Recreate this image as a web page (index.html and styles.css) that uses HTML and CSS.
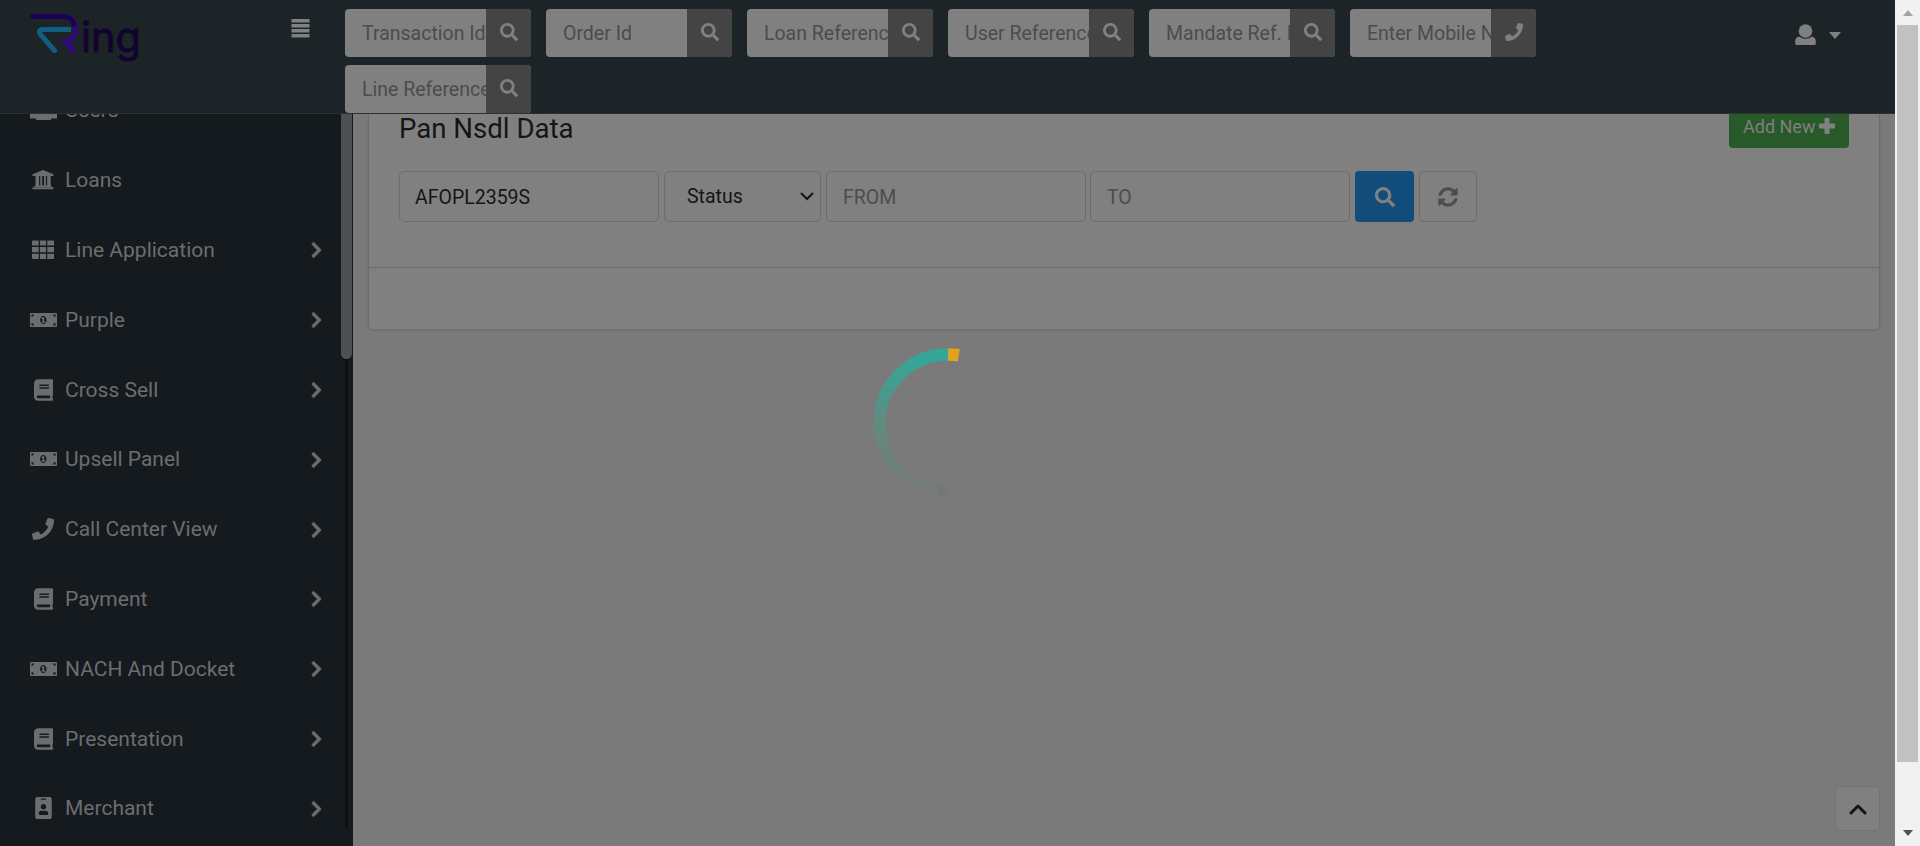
FILE: index.html
```html
<!DOCTYPE html>
<html lang="en">
<head>
<meta charset="utf-8">
<title>Pan Nsdl Data</title>
<link rel="stylesheet" href="styles.css">
</head>
<body>
<svg class="defs" width="0" height="0">
  <symbol id="search" viewBox="0 0 512 512"><path d="M505 442.7L405.3 343c-4.500-4.500-10.600-7-17-7H372c27.600-35.300 44-79.700 44-128C416 93.100 322.900 0 208 0S0 93.100 0 208s93.100 208 208 208c48.300 0 92.700-16.400 128-44v16.300c0 6.400 2.500 12.500 7 17l99.700 99.700c9.400 9.400 24.600 9.400 33.900 0l28.300-28.300c9.400-9.400 9.400-24.600.1-34zM208 336c-70.700 0-128-57.200-128-128 0-70.700 57.200-128 128-128 70.700 0 128 57.200 128 128 0 70.700-57.200 128-128 128z"/></symbol>
  <symbol id="phone" viewBox="0 0 512 512"><path d="M493.400 24.600l-104-24c-11.300-2.600-22.900 3.300-27.500 13.900l-48 112c-4.200 9.800-1.400 21.300 6.900 28l60.600 49.600c-36 76.700-98.900 140.500-177.200 177.200l-49.600-60.600c-6.800-8.300-18.200-11.100-28-6.900l-112 48C3.900 366.500-2 378.100.6 389.400l24 104C27.100 504.200 36.700 512 48 512c256.100 0 464-207.500 464-464 0-11.200-7.700-20.900-18.600-23.400z"/></symbol>
  <symbol id="chev" viewBox="0 0 320 512"><path stroke-width="24" d="M285.476 272.971L91.132 467.314c-9.373 9.373-24.569 9.373-33.941 0l-22.667-22.667c-9.357-9.357-9.375-24.522-.04-33.901L188.505 256 34.484 101.255c-9.335-9.379-9.317-24.544.04-33.901l22.667-22.667c9.373-9.373 24.569-9.373 33.941 0L285.475 239.030c9.373 9.372 9.373 24.568.001 33.941z"/></symbol>
  <symbol id="bank" viewBox="0 0 22 20"><path d="M11 0 21.500 4.300V6H.5V4.300zM3.500 6h3.600v9.500h1.200V6h1.900v9.500h1.800V6h1.900v9.500h1.200V6h3.600v9.500h.7v1.500H2.800v-1.500h.7zM.5 17.200h21v2H.5z"/></symbol>
  <symbol id="grid" viewBox="0 0 22 20"><path d="M1 .5h5.700v5H0V1.500a1 1 0 0 1 1-1zM7.900.5h6.200v5H7.900zM15.300.5H21a1 1 0 0 1 1 1v4h-6.700zM0 7h6.700v5.200H0zM7.900 7h6.200v5.200H7.900zM15.300 7H22v5.200h-6.700zM0 13.700h6.700v5.300H1a1 1 0 0 1-1-1zM7.900 13.700h6.200v5.300H7.900zM15.300 13.700H22V18a1 1 0 0 1-1 1h-5.700z"/></symbol>
  <symbol id="money" viewBox="0 0 27 14"><path fill-rule="evenodd" d="M1 0h25a1 1 0 0 1 1 1v12a1 1 0 0 1-1 1H1a1 1 0 0 1-1-1V1a1 1 0 0 1 1-1zM1.500 1.500v2.400a2.400 2.400 0 0 0 2.400-2.400zM25.500 1.500h-2.400a2.400 2.400 0 0 0 2.400 2.400zM1.500 12.500h2.400a2.400 2.400 0 0 0-2.400-2.400zM25.500 12.500v-2.400a2.400 2.400 0 0 0-2.400 2.400zM13.300 3c-1.800 0-3.200 1.800-3.200 4s1.400 4 3.200 4 3.200-1.800 3.200-4-1.400-4-3.200-4z"/><path d="M12.300 4.200h1.900v4.400h.9v1.100h-3.500v-1.100h.9V5.900h-.9v-1z"/></symbol>
  <symbol id="book" viewBox="0 0 448 512"><path d="M448 360V24c0-13.300-10.700-24-24-24H96C43 0 0 43 0 96v320c0 53 43 96 96 96h328c13.300 0 24-10.700 24-24v-16c0-7.500-3.500-14.300-8.900-18.700-4.200-15.400-4.200-59.300 0-74.700 5.400-4.300 8.900-11.100 8.900-18.600zM128 134c0-3.300 2.700-6 6-6h212c3.300 0 6 2.700 6 6v20c0 3.300-2.700 6-6 6H134c-3.300 0-6-2.700-6-6v-20zm0 64c0-3.300 2.700-6 6-6h212c3.300 0 6 2.700 6 6v20c0 3.300-2.700 6-6 6H134c-3.300 0-6-2.700-6-6v-20zm253.400 250H96c-17.700 0-32-14.300-32-32 0-17.600 14.400-32 32-32h285.400c-1.900 17.100-1.900 46.900 0 64z"/></symbol>
  <symbol id="badge" viewBox="0 0 384 512"><path d="M336 0H48C21.500 0 0 21.500 0 48v416c0 26.500 21.500 48 48 48h288c26.500 0 48-21.500 48-48V48c0-26.500-21.500-48-48-48zM144 32h96c8.800 0 16 7.200 16 16s-7.200 16-16 16h-96c-8.800 0-16-7.200-16-16s7.200-16 16-16zm48 128c35.300 0 64 28.700 64 64s-28.700 64-64 64-64-28.700-64-64 28.700-64 64-64zm112 236.800c0 10.600-10 19.200-22.400 19.200H102.400C90 416 80 407.400 80 396.800v-19.200c0-31.800 30.100-57.600 67.200-57.600h5c12.300 5.100 25.700 8 39.800 8s27.600-2.900 39.800-8h5c37.100 0 67.200 25.800 67.200 57.600v19.200z"/></symbol>
  <symbol id="users" viewBox="0 0 27 20"><path d="M6 14V8h15v6h6v4.500H21v1.500H6v-1.500H0V14z"/></symbol>
</svg>
<div class="window">
<div class="app">
  <header class="header">
    <svg class="logo" viewBox="0 0 114 54" width="114" height="54">
      <path d="M36 6C44 6 50.300 13 50.300 21C50.300 28 46.500 33.300 42.500 34.800L47.500 40.700A2.500 2.500 0 0 1 43.600 44.400L31.500 31H38C43 31 45.500 26.500 45.500 21C45.500 15 42 10.500 36 10.800Z" fill="#2f0a78"/>
      <path d="M4.500 8.500H36C41 8.500 44.500 12 45.800 16" fill="none" stroke="#1a0252" stroke-width="5" stroke-linecap="round"/>
      <path d="M43 21.500H14.500C11.500 21.500 10.500 24 12.500 26.300L26.500 42.600" fill="none" stroke="#115f80" stroke-width="5"/>
      <circle cx="26.600" cy="42.400" r="2.500" fill="#115f80"/>
      <text x="53" y="44" font-size="41" textLength="60" lengthAdjust="spacingAndGlyphs" class="logo-text">ing</text>
    </svg>
    <svg class="bars" viewBox="0 0 19 19" width="19" height="19"><path d="M.5 0h18v3.500H.5zM.5 5h18v3.500H.5zM.5 10h18v3.500H.5zM.5 15h18v3.500H.5z"/></svg>
    <div class="lookups">
      <div class="lookup"><span>Transaction Id</span><b><svg><use href="#search"/></svg></b></div>
      <div class="lookup"><span>Order Id</span><b><svg><use href="#search"/></svg></b></div>
      <div class="lookup"><span>Loan Reference</span><b><svg><use href="#search"/></svg></b></div>
      <div class="lookup"><span>User Reference</span><b><svg><use href="#search"/></svg></b></div>
      <div class="lookup"><span>Mandate Ref. No</span><b><svg><use href="#search"/></svg></b></div>
      <div class="lookup"><span>Enter Mobile No</span><b><svg><use href="#phone"/></svg></b></div>
      <div class="lookup"><span>Line Reference</span><b><svg><use href="#search"/></svg></b></div>
    </div>
    <div class="account">
      <svg viewBox="0 0 21 21" width="21" height="21"><circle cx="10.500" cy="7" r="6.800"/><path d="M4.500 12.800Q7 14.800 10.500 14.800T16.500 12.800C19.500 12.800 20.800 15 20.800 18V19.500Q20.800 21 19.300 21H1.700Q.2 21 .2 19.500V18C.2 15 1.500 12.800 4.500 12.800Z"/></svg>
      <i class="caret"></i>
    </div>
  </header>
  <div class="body">
    <nav class="sidebar">
      <ul class="menu">
        <li><svg width="27" height="20"><use href="#users"/></svg><span>Users</span></li>
        <li><svg width="22" height="20"><use href="#bank"/></svg><span>Loans</span></li>
        <li><svg width="22" height="20"><use href="#grid"/></svg><span>Line Application</span><svg class="chev"><use href="#chev"/></svg></li>
        <li><svg width="27" height="14"><use href="#money"/></svg><span>Purple</span><svg class="chev"><use href="#chev"/></svg></li>
        <li><svg width="19" height="22"><use href="#book"/></svg><span>Cross Sell</span><svg class="chev"><use href="#chev"/></svg></li>
        <li><svg width="27" height="14"><use href="#money"/></svg><span>Upsell Panel</span><svg class="chev"><use href="#chev"/></svg></li>
        <li><svg width="22" height="22"><use href="#phone"/></svg><span>Call Center View</span><svg class="chev"><use href="#chev"/></svg></li>
        <li><svg width="19" height="22"><use href="#book"/></svg><span>Payment</span><svg class="chev"><use href="#chev"/></svg></li>
        <li><svg width="27" height="14"><use href="#money"/></svg><span>NACH And Docket</span><svg class="chev"><use href="#chev"/></svg></li>
        <li><svg width="19" height="22"><use href="#book"/></svg><span>Presentation</span><svg class="chev"><use href="#chev"/></svg></li>
        <li><svg width="17" height="22"><use href="#badge"/></svg><span>Merchant</span><svg class="chev"><use href="#chev"/></svg></li>
      </ul>
      <div class="rail"></div>
      <div class="rail-thumb"></div>
    </nav>
    <main class="main">
      <section class="card">
        <div class="card-top">
          <div class="title-row">
            <h1>Pan Nsdl Data</h1>
            <div class="add">Add New <svg viewBox="0 0 16 16" width="16" height="16"><path d="M6 0h4q.5 0 .5.500v5h5q.5 0 .5.500v4q0 .5-.5.500h-5v5q0 .5-.5.500H6q-.5 0-.5-.5v-5h-5Q0 10.500 0 10V6q0-.5.500-.5h5v-5Q5.500 0 6 0z"/></svg></div>
          </div>
          <div class="filters">
            <div class="field dark">AFOPL2359S</div>
            <div class="field select">Status<svg viewBox="0 0 14 9" width="14" height="9"><path d="M1 1l6 6 6-6" fill="none" stroke="#151515" stroke-width="2"/></svg></div>
            <div class="field">FROM</div>
            <div class="field to">TO</div>
            <div class="btn go"><svg width="20" height="20"><use href="#search"/></svg></div>
            <div class="btn reset"><svg viewBox="0 0 512 512" width="20" height="20"><path d="M370.700 133.300C339.500 104 298.900 88 255.800 88c-77.500.1-144.300 53.200-162.800 126.900-1.300 5.400-6.100 9.100-11.700 9.100H24.100c-7.500 0-13.200-6.800-11.800-14.200C33.900 94.900 134.800 8 256 8c66.400 0 126.800 26.100 171.300 68.700L463 41c15.100-15.100 41-4.400 41 17v134c0 13.300-10.700 24-24 24H346c-21.400 0-32.100-25.900-17-41zM32 296h134c21.400 0 32.100 25.900 17 41l-41.700 41.700c31.200 29.300 71.800 45.300 114.900 45.300 77.400-.1 144.300-53.200 162.800-126.800 1.300-5.400 6.100-9.200 11.700-9.200h57.300c7.500 0 13.200 6.800 11.800 14.200C478.100 417.100 377.200 504 256 504c-66.400 0-126.800-26.100-171.300-68.700L49 471c-15.100 15.100-41 4.400-41-17V320c0-13.300 10.700-24 24-24z"/></svg></div>
          </div>
        </div>
        <div class="card-bottom"></div>
      </section>
    </main>
  </div>
  <svg class="spinner" viewBox="0 0 150 150" width="150" height="150">
    <defs><linearGradient id="fade" gradientUnits="userSpaceOnUse" x1="0" y1="0" x2="0" y2="150"><stop offset="0" stop-color="#2fa899"/><stop offset=".18" stop-color="#3fa091"/><stop offset=".5" stop-color="#628a80"/><stop offset=".8" stop-color="#717f7a"/><stop offset="1" stop-color="#7a7a7a"/></linearGradient></defs>
    <path d="M75 6.500A68.500 68.500 0 0 0 64.500 142.700" fill="none" stroke="url(#fade)" stroke-width="12.500"/>
    <path d="M64.500 138h10.500v9.500h-10.500z" fill="#73767b"/>
    <path d="M75 6.500A68.500 68.500 0 0 1 85.800 7.300" fill="none" stroke="#e0a31f" stroke-width="12.500"/>
  </svg>
  <div class="to-top"><svg viewBox="0 0 18 11" width="18" height="11"><path d="M2 9l7-7 7 7" fill="none" stroke="#151515" stroke-width="3" stroke-linecap="round" stroke-linejoin="round"/></svg></div>
</div>
<div class="scrollbar"><i class="up"></i><div class="thumb"></div><i class="down"></i></div>
</div>
</body>
</html>
```
FILE: styles.css
```css
* { box-sizing: border-box; }
body { margin: 0; background: #7a7a7a; font-family: Roboto, "Liberation Sans", sans-serif; overflow: hidden; }
.defs { position: absolute; }
.window { display: flex; width: 1920px; height: 846px; }
.app { position: relative; display: flex; flex-direction: column; width: 1895px; height: 846px; }
.header { display: flex; align-items: flex-start; height: 114px; flex: none; background: #1c2427; border-bottom: 1px solid #2b3033; padding: 8px 0 0 28px; }
.logo { display: block; flex: none; overflow: visible; }
.logo-text { font-family: Inter, sans-serif; font-weight: 400; fill: #12032f; stroke: #12032f; stroke-width: .8; stroke-linejoin: round; }
.bars { margin: 11px 0 0 149px; fill: #808080; flex: none; }
.lookups { display: flex; flex-wrap: wrap; gap: 8px 15px; width: 1206px; margin: 1px 0 0 35px; flex: none; }
.lookup { display: flex; width: 186px; height: 48px; border-radius: 4px; overflow: hidden; background: #808080; }
.lookup span { width: 141px; padding-left: 17px; line-height: 49px; font-size: 19.5px; white-space: nowrap; overflow: hidden; color: #4c4c4c; }
.lookup b { display: flex; width: 45px; justify-content: center; padding-top: 14px; background: #444; }
.lookup svg { width: 18px; height: 18px; fill: #808080; }
.account { display: flex; gap: 13px; align-items: center; margin: 16px 0 0 244px; fill: #808080; }
.caret { margin-top: 1px; border: 6px solid transparent; border-top: 7px solid #808080; border-bottom: 0; }
.body { display: flex; height: 732px; overflow: hidden; }
.sidebar { position: relative; width: 353px; height: 732px; overflow: hidden; background: #151a1e; flex: none; }
.menu { list-style: none; margin: -38.5px 0 0; padding: 0 31px 0 30px; }
.menu li { display: grid; grid-template-columns: 27px 1fr 11px; column-gap: 8px; align-items: center; height: 69.8px; color: #6c6d6e; fill: #6c6d6e; font-size: 21px; }
.menu li > svg:first-child { justify-self: center; }
.menu li > svg[width="22"] { position: relative; left: -.5px; }
.menu .chev { width: 11px; height: 18px; margin-top: 1px; stroke: #6c6d6e; }
.rail { position: absolute; left: 345px; top: 0; width: 3px; height: 713px; background: #0d1012; }
.rail-thumb { position: absolute; left: 341px; top: -20px; width: 11px; height: 265px; border-radius: 6px; background: #4f5051; }
.main { flex: 1; padding: 0 15px; }
.card { height: 216px; border: 1px solid #6c6c6c; border-top: 0; border-radius: 0 0 5px 5px; background: #808080; box-shadow: 0 1px 3px rgba(0,0,0,.08); }
.card-top { height: 154px; border-bottom: 1px solid #6c6c6c; padding: 0 30px; }
.title-row { display: flex; justify-content: space-between; height: 57px; }
h1 { margin: -2px 0 0; font-size: 27.6px; line-height: 34px; font-weight: 400; color: #151515; }
.add { display: flex; align-items: center; gap: 4px; width: 120px; height: 48px; margin-top: -14px; padding: 4px 0 0 14px; border-radius: 4px; background: #275929; color: #808080; fill: #808080; font-size: 18px; }
.filters { display: flex; height: 51px; }
.field { width: 260px; height: 51px; margin-right: 5px; padding-left: 16px; line-height: 51px; border: 1px solid #6d6d6d; border-radius: 5px; font-size: 19.5px; color: #4c4c4c; }
.field.dark { padding-left: 15px; color: #151515; }
.field.select { display: flex; align-items: center; justify-content: space-between; width: 157px; padding: 0 6px 0 22px; color: #151515; }
.field:nth-child(3) { margin-right: 4px; }
.btn { display: flex; align-items: center; justify-content: center; height: 51px; border-radius: 4px; }
.go { width: 59px; margin-right: 5px; background: #124c7a; fill: #808080; }
.reset { width: 58px; border: 1px solid #6d6d6d; fill: #4d4d4d; }
.spinner { position: absolute; left: 873px; top: 347.5px; }
.to-top { position: absolute; left: 1835px; top: 786px; display: flex; align-items: center; justify-content: center; width: 45px; height: 45px; padding-top: 2px; border: 1px solid #737373; border-radius: 4px; background: #808080; }
.scrollbar { display: flex; flex-direction: column; align-items: center; width: 25px; background: #f1f1f1; }
.up { margin-top: 10px; border: 5.5px solid transparent; border-top: 0; border-bottom: 6px solid #a3a3a3; }
.thumb { width: 21px; height: 737px; margin-top: 9px; background: #c1c1c1; }
.down { margin-top: 68px; border: 5.5px solid transparent; border-bottom: 0; border-top: 6px solid #505050; }
```
